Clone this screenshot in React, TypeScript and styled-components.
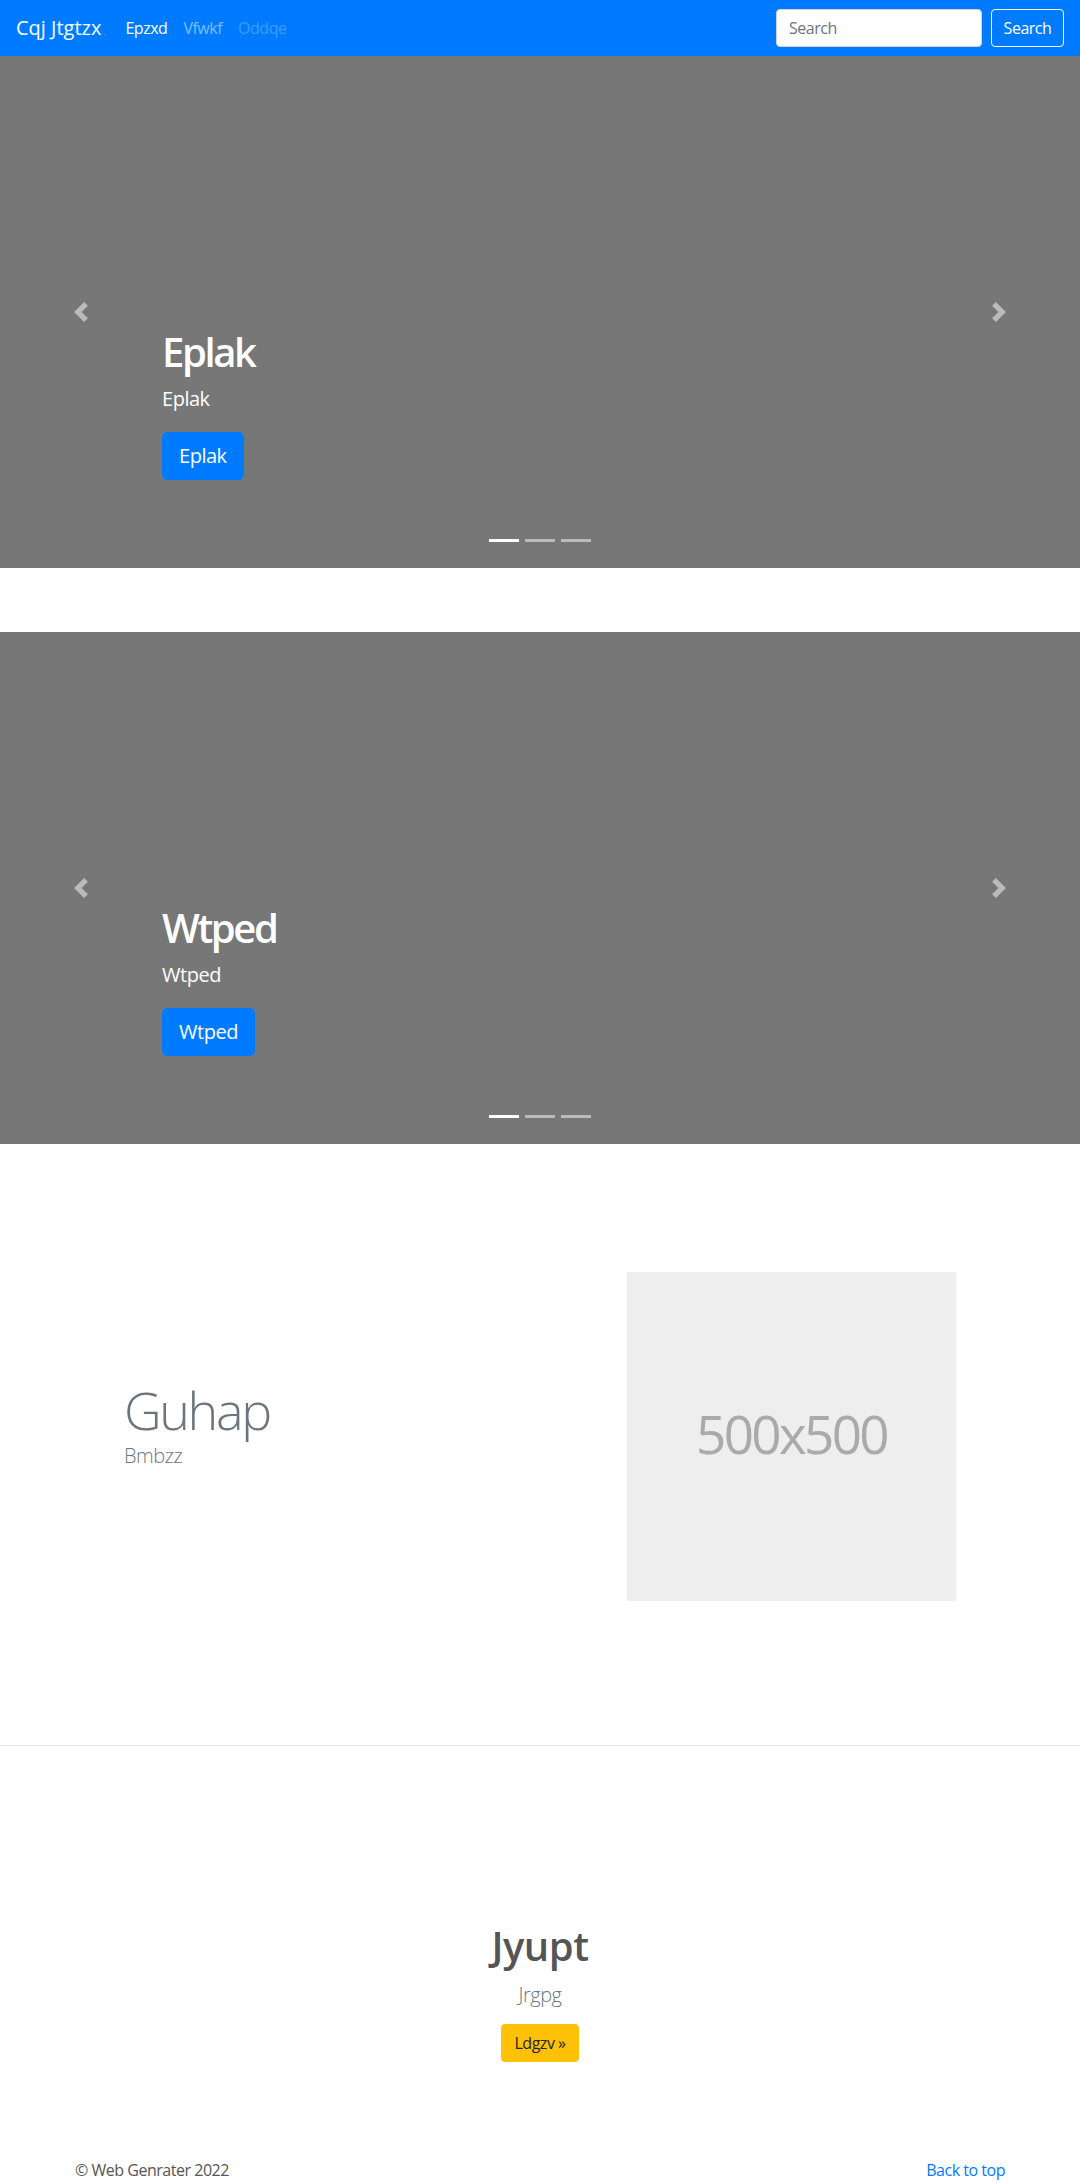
import React from "react";
import styled, { createGlobalStyle } from "styled-components";

const GlobalStyle = createGlobalStyle`
  * { box-sizing: border-box; }
  body {
    margin: 0;
    font-family: "Open Sans", "Noto Sans", "Liberation Sans", sans-serif;
    font-size: 16px;
    line-height: 1.5;
    color: #212529;
    background: #fff;
    letter-spacing: -0.03em;
  }
`;

const Navbar = styled.nav`
  display: flex;
  align-items: center;
  height: 56px;
  padding: 8px 16px;
  background: #007bff;
`;

const Brand = styled.a`
  font-size: 20px;
  line-height: 30px;
  padding: 5px 0;
  margin-right: 16px;
  color: #fff;
  text-decoration: none;
  white-space: nowrap;
  letter-spacing: 0;
`;

const NavList = styled.ul`
  display: flex;
  list-style: none;
  margin: 0;
  padding: 0;
  flex: 1;
`;

const NavLink = styled.a<{ $state: "active" | "normal" | "disabled" }>`
  display: block;
  padding: 8px;
  font-size: 16px;
  line-height: 24px;
  text-decoration: none;
  color: ${(p) =>
    p.$state === "active"
      ? "#fff"
      : p.$state === "normal"
      ? "rgba(255,255,255,0.5)"
      : "rgba(255,255,255,0.25)"};
`;

const SearchForm = styled.form`
  display: flex;
  align-items: center;
  gap: 9px;
`;

const SearchInput = styled.input`
  width: 206px;
  height: 38px;
  padding: 6px 12px;
  font-family: inherit;
  font-size: 16px;
  letter-spacing: -0.03em;
  color: #495057;
  background: #fff;
  border: 1px solid #ced4da;
  border-radius: 4px;
  outline: none;
  &::placeholder { color: #6c757d; }
`;

const OutlineButton = styled.button`
  width: 73px;
  height: 38px;
  padding: 6px 0;
  font-family: inherit;
  font-size: 16px;
  letter-spacing: -0.03em;
  line-height: 24px;
  color: #fff;
  background: transparent;
  border: 1px solid #fff;
  border-radius: 4px;
`;

const Carousel = styled.section<{ $gap?: boolean }>`
  position: relative;
  height: 512px;
  background: #777;
  margin-bottom: ${(p) => (p.$gap ? "64px" : "0")};
  overflow: hidden;
`;

const Caption = styled.div`
  position: absolute;
  left: 15%;
  right: 15%;
  bottom: 88px;
  display: flex;
  flex-direction: column;
  align-items: flex-start;
  color: #fff;
  z-index: 10;
`;

const CaptionTitle = styled.h1`
  margin: 0 0 8px;
  font-size: 40px;
  line-height: 48px;
  font-weight: 600;
  letter-spacing: -0.06em;
`;

const CaptionText = styled.p`
  margin: 0 0 18px;
  font-size: 20px;
  line-height: 30px;
`;

const PrimaryButton = styled.a`
  display: inline-block;
  padding: 8px 16px;
  font-size: 20px;
  line-height: 30px;
  color: #fff;
  background: #007bff;
  border: 1px solid #007bff;
  border-radius: 5px;
  text-decoration: none;
`;

const Control = styled.a<{ $side: "left" | "right" }>`
  position: absolute;
  top: 0;
  bottom: 0;
  ${(p) => p.$side}: 0;
  width: 15%;
  display: flex;
  align-items: center;
  justify-content: center;
  opacity: 0.5;
`;

const Indicators = styled.ol`
  position: absolute;
  left: 0;
  right: 0;
  bottom: 0;
  margin: 0 15% 16px;
  padding: 0;
  display: flex;
  justify-content: center;
  list-style: none;
`;

const Indicator = styled.li<{ $active?: boolean }>`
  width: 30px;
  height: 23px;
  margin: 0 3px;
  border-top: 10px solid transparent;
  border-bottom: 10px solid transparent;
  background: #fff;
  background-clip: padding-box;
  opacity: ${(p) => (p.$active ? 1 : 0.5)};
`;

const Container = styled.div`
  width: 960px;
  margin: 0 auto;
`;

const Featurette = styled.section`
  padding: 128px 0 144px;
  border-bottom: 1px solid rgba(0, 0, 0, 0.1);
`;

const FeatureRow = styled.div`
  display: grid;
  grid-template-columns: 1fr 1fr;
  align-items: center;
`;

const FeatureText = styled.div`
  padding: 0 0 24px 64px;
`;

const FeatureHeading = styled.h2`
  margin: 0;
  font-size: 52px;
  line-height: 62px;
  font-weight: 300;
  color: #6c757d;
  letter-spacing: -0.045em;
`;

const Lead = styled.p<{ $center?: boolean }>`
  margin: 0;
  font-size: 20px;
  line-height: 30px;
  font-weight: 300;
  color: #6c757d;
  text-align: ${(p) => (p.$center ? "center" : "left")};
`;

const FeatureMedia = styled.div`
  display: flex;
  justify-content: flex-end;
  padding-right: 64px;
`;

const Placeholder = styled.div`
  width: 329px;
  height: 329px;
  background: #eee;
  color: #aaa;
  display: flex;
  align-items: center;
  justify-content: center;
  font-size: 53px;
  letter-spacing: -0.05em;
  padding-bottom: 6px;
`;

const Marketing = styled.section`
  padding-top: 176px;
  display: flex;
  flex-direction: column;
  align-items: center;
`;

const MarketingTitle = styled.h2`
  margin: 0 0 10px;
  font-size: 40px;
  line-height: 48px;
  font-weight: 600;
  color: #555;
`;

const WarningButton = styled.a`
  display: inline-block;
  margin-top: 14px;
  padding: 6px 12px;
  font-size: 16px;
  line-height: 24px;
  color: #212529;
  background: #ffc107;
  border: 1px solid #ffc107;
  border-radius: 4px;
  text-decoration: none;
`;

const Footer = styled.footer`
  width: 960px;
  margin: 96px auto 0;
  padding: 0 15px;
  display: flex;
  justify-content: space-between;
  font-size: 16px;
  line-height: 24px;
`;

const FooterText = styled.p`
  margin: 0;
  color: #555;
`;

const FooterLink = styled.a`
  color: #007bff;
  text-decoration: none;
`;

const Chevron = ({ dir }: { dir: "prev" | "next" }) => (
  <svg width="20" height="20" viewBox="0 0 8 8" fill="#fff">
    {dir === "prev" ? (
      <path d="M5.25 0l-4 4 4 4 1.5-1.5L4.25 4l2.5-2.5L5.25 0z" />
    ) : (
      <path d="M2.75 0l-1.5 1.5L3.75 4l-2.5 2.5L2.75 8l4-4-4-4z" />
    )}
  </svg>
);

const Slide = ({ title, gap }: { title: string; gap?: boolean }) => (
  <Carousel $gap={gap}>
    <Indicators>
      <Indicator $active />
      <Indicator />
      <Indicator />
    </Indicators>
    <Caption>
      <CaptionTitle>{title}</CaptionTitle>
      <CaptionText>{title}</CaptionText>
      <PrimaryButton href="#">{title}</PrimaryButton>
    </Caption>
    <Control $side="left" href="#">
      <Chevron dir="prev" />
    </Control>
    <Control $side="right" href="#">
      <Chevron dir="next" />
    </Control>
  </Carousel>
);

export default function App() {
  return (
    <>
      <GlobalStyle />
      <Navbar>
        <Brand href="#">Cqj Jtgtzx</Brand>
        <NavList>
          <li><NavLink $state="active" href="#">Epzxd</NavLink></li>
          <li><NavLink $state="normal" href="#">Vfwkf</NavLink></li>
          <li><NavLink $state="disabled" href="#">Oddqe</NavLink></li>
        </NavList>
        <SearchForm onSubmit={(e) => e.preventDefault()}>
          <SearchInput type="text" placeholder="Search" />
          <OutlineButton type="submit">Search</OutlineButton>
        </SearchForm>
      </Navbar>
      <Slide title="Eplak" gap />
      <Slide title="Wtped" />
      <Featurette>
        <Container>
          <FeatureRow>
            <FeatureText>
              <FeatureHeading>Guhap</FeatureHeading>
              <Lead>Bmbzz</Lead>
            </FeatureText>
            <FeatureMedia>
              <Placeholder>500x500</Placeholder>
            </FeatureMedia>
          </FeatureRow>
        </Container>
      </Featurette>
      <Marketing>
        <MarketingTitle>Jyupt</MarketingTitle>
        <Lead $center>Jrgpg</Lead>
        <WarningButton href="#">Ldgzv »</WarningButton>
      </Marketing>
      <Footer>
        <FooterText>© Web Genrater 2022</FooterText>
        <FooterLink href="#">Back to top</FooterLink>
      </Footer>
    </>
  );
}
